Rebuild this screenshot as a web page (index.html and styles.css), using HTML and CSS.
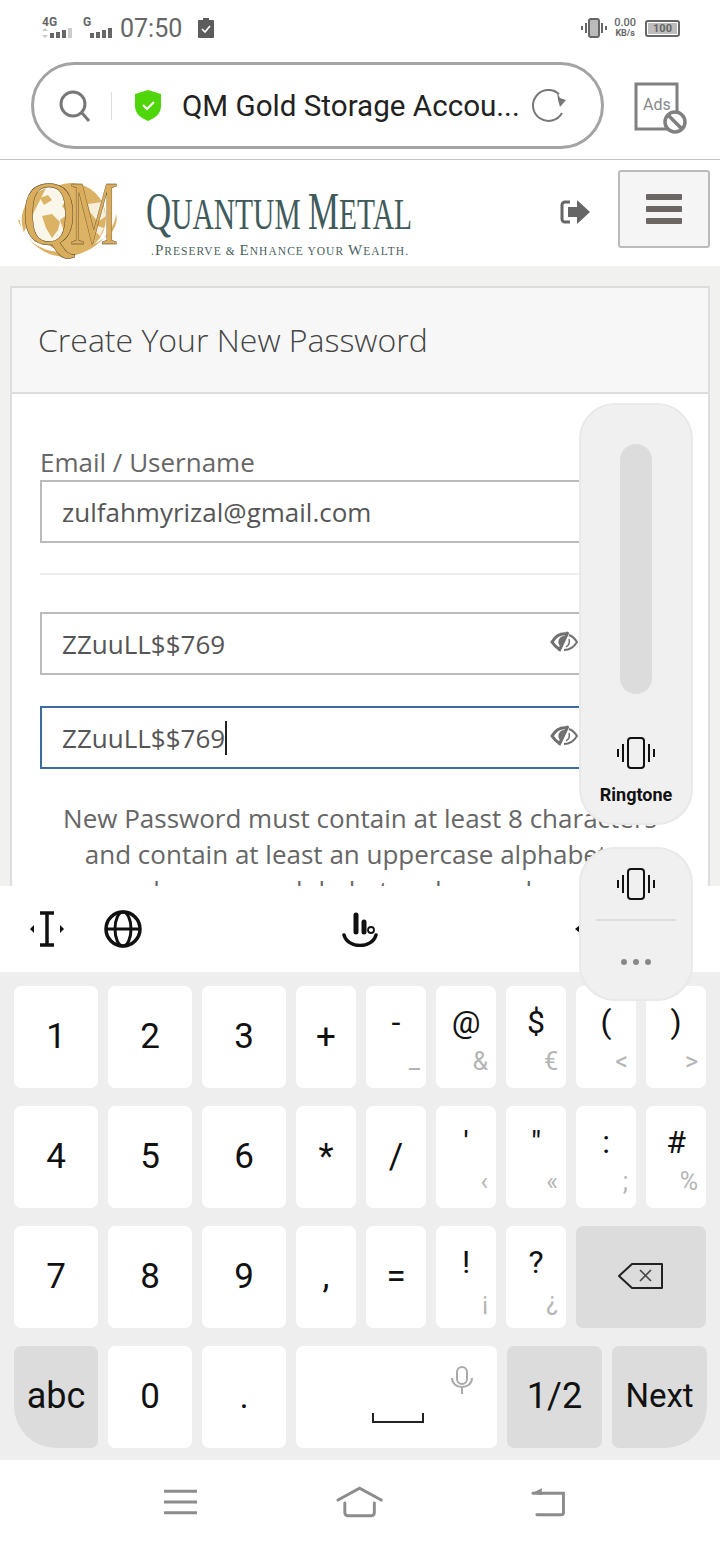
FILE: index.html
```html
<!DOCTYPE html>
<html lang="en">

<head>
    <meta charset="UTF-8">
    <meta name="viewport" content="width=device-width, initial-scale=1.0">
    <title>Create Your New Password</title>
    <link rel="stylesheet" href="styles.css">
</head>

<body>
    <div class="phone">
        <!-- status bar -->
        <div class="status">
            <div class="status-left">
                <div class="sig">
                    <span class="net">4G</span>
                    <svg width="32" height="10" viewBox="0 0 32 10">
                        <path d="M3 0l3 3H0zM3 10l3-3H0z" fill="#c8c8c8" />
                        <path d="M8 5h4v5H8zM14 4h4v6h-4zM20 2h4v8h-4z" fill="#666" />
                        <path d="M26 0h4v10h-4z" fill="#ccc" />
                    </svg>
                </div>
                <div class="sig sig-g">
                    <span class="net">G</span>
                    <svg width="32" height="10" viewBox="0 0 32 10">
                        <path d="M8 5h4v5H8zM14 4h4v6h-4zM20 2h4v8h-4zM26 0h4v10h-4z" fill="#666" />
                    </svg>
                </div>
                <span class="clock">07:50</span>
                <svg class="charge" width="16" height="20" viewBox="0 0 16 20">
                    <path d="M5 0h6v2h4a1 1 0 0 1 1 1v16a1 1 0 0 1-1 1H1a1 1 0 0 1-1-1V3a1 1 0 0 1 1-1h4z" fill="#5c5c5c" />
                    <path d="M4 11l3 3 5-6" fill="none" stroke="#fff" stroke-width="1.6" />
                </svg>
            </div>
            <div class="status-right">
                <svg width="26" height="20" viewBox="0 0 26 20">
                    <rect x="8" y="1" width="10" height="18" rx="2" fill="#bbb" stroke="#666" stroke-width="2" />
                    <path d="M5 5v10M21 5v10M1 8v4M25 8v4" stroke="#666" stroke-width="2" fill="none" />
                </svg>
                <div class="speed"><span>0.00</span><span class="speed-unit">KB/s</span></div>
                <div class="battery"><span class="battery-fill">100</span></div>
            </div>
        </div>

        <!-- browser address bar -->
        <div class="browser">
            <div class="address">
                <svg class="search" width="34" height="32" viewBox="0 0 34 32">
                    <circle cx="15" cy="14" r="12" fill="none" stroke="#777" stroke-width="3" />
                    <path d="M24 23l7 8" stroke="#777" stroke-width="3" fill="none" />
                </svg>
                <span class="address-sep"></span>
                <svg class="shield" width="26" height="31" viewBox="0 0 26 31">
                    <path d="M13 0l13 4v12c0 8-6 12-13 15C6 28 0 24 0 16V4z" fill="#4fd60a" />
                    <path d="M8 15l4 4 7-7" fill="none" stroke="#fff" stroke-width="2" />
                </svg>
                <span class="address-text">QM Gold Storage Accou...</span>
                <svg class="reload" width="36" height="34" viewBox="0 0 36 34">
                    <path d="M27 5A15.500 15.500 0 1 0 30 24" fill="none" stroke="#777" stroke-width="2" />
                    <path d="M25 3l3 6 6 2-6 7-2-7z" fill="#777" />
                </svg>
            </div>
            <svg class="ads" width="54" height="54" viewBox="0 0 54 54">
                <path d="M34 47H2V2h41v28" fill="none" stroke="#808080" stroke-width="3" />
                <text x="9" y="28" class="ads-text">Ads</text>
                <circle cx="41" cy="40" r="10" fill="#fff" stroke="#808080" stroke-width="3.5" />
                <path d="M34 33l14 14" stroke="#808080" stroke-width="3.5" />
            </svg>
        </div>

        <!-- site header -->
        <div class="site-header">
            <svg class="logo" width="100" height="84" viewBox="0 0 100 84">
                <circle cx="53" cy="38" r="35" fill="#dcb264" />
                <path d="M14 16c8-6 20-10 28-8l8 10-6 8 6 8-8 6 4 12-8 14c-12-2-20-8-24-20z" fill="#fbf6ea" />
                <path d="M24 36l10-2 8 8-2 8-6 8-6-10zM22 18l8-3 4 5-8 5z" fill="#dcb264" />
                <path d="M70 24l14-2 4 14-8 6-8-10zM80 46l6 2-4 8-4-4z" fill="#f7eeda" />
                <path d="M6 52c-8-20 6-38 22-44M2 40c0 22 40 52 90 14 6-6 8-14 6-20-1 14-16 36-44 42-22 4-44-10-54-36z" fill="#dcb264" />
                <text x="4" y="64" class="logo-letter" textLength="54" lengthAdjust="spacingAndGlyphs">Q</text>
                <text x="52" y="64" class="logo-letter" textLength="48" lengthAdjust="spacingAndGlyphs">M</text>
            </svg>
            <svg class="brand" width="272" height="76" viewBox="0 0 272 76">
                <text x="0" y="45" class="brand-name" textLength="266" lengthAdjust="spacingAndGlyphs"><tspan class="brand-cap">Q</tspan>UANTUM <tspan class="brand-cap">M</tspan>ETAL</text>
                <text x="5" y="71" class="brand-tag" textLength="257" lengthAdjust="spacing">.<tspan class="tag-cap">P</tspan>RESERVE &amp; <tspan class="tag-cap">E</tspan>NHANCE YOUR <tspan class="tag-cap">W</tspan>EALTH.</text>
            </svg>
            <svg class="logout" width="30" height="26" viewBox="0 0 30 26">
                <path d="M10 3H5a3 3 0 0 0-3 3v14a3 3 0 0 0 3 3h5" fill="none" stroke="#666" stroke-width="3" />
                <path d="M8 8h9V1l13 12-13 12v-7H8z" fill="#666" />
            </svg>
            <div class="menu-btn">
                <span class="menu-bar"></span>
                <span class="menu-bar"></span>
                <span class="menu-bar"></span>
            </div>
        </div>

        <!-- page content -->
        <div class="content">
            <div class="card">
                <div class="card-head">Create Your New Password</div>
                <div class="card-body">
                    <label class="field-label">Email / Username</label>
                    <div class="field">zulfahmyrizal@gmail.com</div>
                    <hr class="divider">
                    <div class="field field-pass">
                        ZZuuLL$$769
                        <svg class="eye" width="28" height="21" viewBox="0 0 28 21">
                            <path d="M17 3C10 2 5 6 2 11c2 3 4 5 7 7" fill="none" stroke="#6f6f6f" stroke-width="3" />
                            <path d="M15 5a6 6 0 0 0-5 10z" fill="#6f6f6f" />
                            <path d="M18 1L9 20" stroke="#6f6f6f" stroke-width="3" />
                            <path d="M19 4c3 1 6 4 8 7-3 5-7 8-13 8" fill="none" stroke="#6f6f6f" stroke-width="2" />
                            <path d="M19 8c1 3 0 6-3 8" fill="none" stroke="#6f6f6f" stroke-width="1.500" />
                        </svg>
                    </div>
                    <div class="field field-pass field-focus">
                        <span>ZZuuLL$$769<span class="caret"></span></span>
                        <svg class="eye" width="28" height="21" viewBox="0 0 28 21">
                            <path d="M17 3C10 2 5 6 2 11c2 3 4 5 7 7" fill="none" stroke="#6f6f6f" stroke-width="3" />
                            <path d="M15 5a6 6 0 0 0-5 10z" fill="#6f6f6f" />
                            <path d="M18 1L9 20" stroke="#6f6f6f" stroke-width="3" />
                            <path d="M19 4c3 1 6 4 8 7-3 5-7 8-13 8" fill="none" stroke="#6f6f6f" stroke-width="2" />
                            <path d="M19 8c1 3 0 6-3 8" fill="none" stroke="#6f6f6f" stroke-width="1.500" />
                        </svg>
                    </div>
                    <p class="help">New Password must contain at least 8 characters<br>and contain at least an uppercase alphabet, a<br>lowercase alphabet and a number</p>
                </div>
            </div>
        </div>

        <!-- keyboard -->
        <div class="kb-tools">
            <svg class="tool-cursor" width="34" height="36" viewBox="0 0 34 36">
                <path d="M10 2h14M10 34h14M17 2v32" stroke="#111" stroke-width="3.500" fill="none" />
                <path d="M0 18l4-4v8zM34 18l-4-4v8z" fill="#111" />
            </svg>
            <svg class="tool-globe" width="38" height="38" viewBox="0 0 38 38">
                <circle cx="19" cy="19" r="17" fill="none" stroke="#111" stroke-width="3.500" />
                <ellipse cx="19" cy="19" rx="8" ry="17" fill="none" stroke="#111" stroke-width="3" />
                <path d="M2 19h34" stroke="#111" stroke-width="3" />
            </svg>
            <svg class="tool-hand" width="36" height="36" viewBox="0 0 36 36">
                <path d="M14 4v17M22 11v10" stroke="#111" stroke-width="5" stroke-linecap="round" fill="none" />
                <circle cx="29" cy="19" r="3" fill="none" stroke="#111" stroke-width="1.800" />
                <path d="M2 24c4 14 28 14 32 0" fill="none" stroke="#111" stroke-width="3.500" stroke-linecap="round" />
            </svg>
            <span class="tool-arrow"></span>
        </div>
        <div class="kb">
            <div class="kb-row">
                <div class="key key-big">1</div>
                <div class="key key-big">2</div>
                <div class="key key-big">3</div>
                <div class="key key-big">+</div>
                <div class="key key-up">-<span class="sub sub-line">_</span></div>
                <div class="key key-up">@<span class="sub">&amp;</span></div>
                <div class="key key-up">$<span class="sub">€</span></div>
                <div class="key key-up">(<span class="sub">&lt;</span></div>
                <div class="key key-up">)<span class="sub">&gt;</span></div>
            </div>
            <div class="kb-row">
                <div class="key key-big">4</div>
                <div class="key key-big">5</div>
                <div class="key key-big">6</div>
                <div class="key key-big">*</div>
                <div class="key key-big">/</div>
                <div class="key key-up">'<span class="sub">‹</span></div>
                <div class="key key-up">"<span class="sub">«</span></div>
                <div class="key key-up">:<span class="sub">;</span></div>
                <div class="key key-up">#<span class="sub">%</span></div>
            </div>
            <div class="kb-row">
                <div class="key key-big">7</div>
                <div class="key key-big">8</div>
                <div class="key key-big">9</div>
                <div class="key key-big">,</div>
                <div class="key key-big">=</div>
                <div class="key key-up">!<span class="sub">¡</span></div>
                <div class="key key-up">?<span class="sub">¿</span></div>
                <div class="key key-fn key-back">
                    <svg width="46" height="26" viewBox="0 0 46 26">
                        <path d="M14 1h30v24H14L1 13z" fill="none" stroke="#222" stroke-width="2" stroke-linejoin="round" />
                        <path d="M22 7l11 11M33 7L22 18" stroke="#444" stroke-width="1.600" />
                    </svg>
                </div>
            </div>
            <div class="kb-row kb-row-last">
                <div class="key key-fn key-abc">abc</div>
                <div class="key key-big">0</div>
                <div class="key key-big">.</div>
                <div class="key key-space">
                    <svg class="mic" width="22" height="28" viewBox="0 0 22 28">
                        <rect x="6" y="1" width="10" height="17" rx="5" fill="none" stroke="#aaa" stroke-width="2" />
                        <path d="M1 12c0 12 20 12 20 0M11 22v6" fill="none" stroke="#aaa" stroke-width="2" />
                    </svg>
                    <svg class="space-mark" width="52" height="11" viewBox="0 0 52 11">
                        <path d="M1 0v9h50V0" fill="none" stroke="#222" stroke-width="2" />
                    </svg>
                </div>
                <div class="key key-fn">1/2</div>
                <div class="key key-fn key-next">Next</div>
            </div>
        </div>

        <!-- navigation bar -->
        <div class="nav">
            <svg width="34" height="26" viewBox="0 0 34 26">
                <path d="M1 2h32M1 13h32M1 24h32" stroke="#8c8c8c" stroke-width="3" stroke-linecap="round" />
            </svg>
            <svg class="nav-home" width="48" height="32" viewBox="0 0 48 32">
                <path d="M2 14L24 2l22 12" fill="none" stroke="#8c8c8c" stroke-width="3" stroke-linecap="round" />
                <path d="M9 17v10a3 3 0 0 0 3 3h24a3 3 0 0 0 3-3V17" fill="none" stroke="#8c8c8c" stroke-width="3" stroke-linecap="round" />
            </svg>
            <svg width="36" height="30" viewBox="0 0 36 30">
                <path d="M2 6h31v20a2 2 0 0 1-2 2H6" fill="none" stroke="#8c8c8c" stroke-width="3" stroke-linecap="round" />
                <path d="M1 6l10-5v7z" fill="#8c8c8c" />
            </svg>
        </div>

        <!-- volume popup over the page -->
        <div class="vol vol-main">
            <div class="vol-track"></div>
            <svg class="vib" width="38" height="32" viewBox="0 0 38 32">
                <rect x="11" y="1" width="16" height="30" rx="3" fill="none" stroke="#111" stroke-width="2" />
                <path d="M6 7v18M32 7v18M1 12v8M37 12v8" stroke="#111" stroke-width="2" />
            </svg>
            <span class="vol-name">Ringtone</span>
        </div>
        <div class="vol vol-small">
            <svg class="vib" width="38" height="32" viewBox="0 0 38 32">
                <rect x="11" y="1" width="16" height="30" rx="3" fill="none" stroke="#111" stroke-width="2" />
                <path d="M6 7v18M32 7v18M1 12v8M37 12v8" stroke="#111" stroke-width="2" />
            </svg>
            <span class="vol-line"></span>
            <div class="vol-dots"><span></span><span></span><span></span></div>
        </div>
    </div>
</body>

</html>
```

FILE: styles.css
```css
* {
    box-sizing: border-box;
}

body {
    margin: 0;
    font-family: Roboto, sans-serif;
    background: #fff;
}

.phone {
    position: relative;
    width: 720px;
    height: 1544px;
    display: flex;
    flex-direction: column;
    overflow: hidden;
}

/* status bar */
.status {
    height: 56px;
    padding: 0 40px 0 42px;
    display: flex;
    justify-content: space-between;
    align-items: center;
    color: #666;
}

.status-left,
.status-right {
    display: flex;
    align-items: center;
}

.sig {
    width: 32px;
    display: flex;
    flex-direction: column;
    gap: 1px;
}

.sig-g {
    margin-left: 8px;
}

.sig-g .net {
    margin-left: 1px;
}

.net {
    font-size: 12px;
    font-weight: 700;
    line-height: 9px;
}

.clock {
    font-size: 25px;
    margin-left: 6px;
}

.charge {
    margin-left: 16px;
}

.speed {
    display: flex;
    flex-direction: column;
    align-items: center;
    font-size: 11px;
    line-height: 10px;
    margin-left: 7px;
    font-weight: 500;
}

.speed-unit {
    font-size: 9px;
    font-weight: 700;
}

.battery {
    width: 35px;
    height: 17px;
    margin-left: 9px;
    border: 2px solid #666;
    border-radius: 3px;
    padding: 1px;
    display: flex;
}

.battery-fill {
    flex: 1;
    background: #bdbdbd;
    font-size: 11px;
    font-weight: 700;
    line-height: 11px;
    text-align: center;
}

/* address bar */
.browser {
    height: 104px;
    padding: 6px 32px 0 31px;
    border-bottom: 1px solid #c4c4c4;
    display: flex;
    align-items: flex-start;
    justify-content: space-between;
}

.address {
    width: 573px;
    height: 87px;
    border: 3px solid #a3a3a3;
    border-radius: 44px;
    padding-left: 24px;
    display: flex;
    align-items: center;
}

.address-sep {
    width: 1px;
    height: 28px;
    background: #ddd;
    margin: 0 23px 0 19px;
}

.address-text {
    font-size: 29.600px;
    color: #222;
    margin-left: 21px;
    white-space: nowrap;
    width: 350px;
}

.ads {
    margin-top: 20px;
}

.ads-text {
    font-family: Roboto, sans-serif;
    font-size: 16px;
    fill: #888;
}

/* site header */
.site-header {
    height: 106px;
    padding: 10px 10px 0 18px;
    display: flex;
    align-items: flex-start;
}

.logo {
    margin-top: 10px;
    flex-shrink: 0;
    overflow: visible;
}

.logo-letter {
    font-family: "Liberation Serif", serif;
    font-size: 92px;
    fill: #d9ad5c;
    stroke: #3d3020;
    stroke-width: 0.500px;
}

.brand {
    margin-left: 28px;
    margin-top: 14px;
    flex-shrink: 0;
}

.brand-name {
    font-family: "Liberation Serif", serif;
    font-size: 44px;
    fill: #3f5b5b;
}

.brand-cap {
    font-size: 52px;
}

.brand-tag {
    font-family: "Liberation Serif", serif;
    font-size: 11.500px;
    fill: #4b5f5f;
}

.tag-cap {
    font-size: 15px;
}

.logout {
    margin-left: 142px;
    margin-top: 29px;
    flex-shrink: 0;
}

.menu-btn {
    width: 92px;
    height: 78px;
    margin-left: 28px;
    border: 2px solid #bbb;
    border-radius: 3px;
    background: #f5f5f5;
    display: flex;
    flex-direction: column;
    align-items: center;
    justify-content: center;
    gap: 6px;
    flex-shrink: 0;
}

.menu-bar {
    width: 36px;
    height: 6px;
    border-radius: 1px;
    background: #6b6664;
}

/* page */
.content {
    height: 620px;
    flex-shrink: 0;
    padding: 20px 10px 0 10px;
    background: #f1f1f0;
    overflow: hidden;
    font-family: "Open Sans", sans-serif;
    color: #555;
}

.card {
    border: 2px solid #ddd;
    background: #fff;
    height: 800px;
}

.card-head {
    height: 106px;
    padding: 32px 0 0 26px;
    background: #f7f7f7;
    border-bottom: 2px solid #ddd;
    font-size: 32px;
    font-weight: 300;
    line-height: 40px;
    color: #444;
}

.card-body {
    padding: 50px 28px 0;
}

.field-label {
    display: block;
    font-size: 26px;
    line-height: 36px;
    color: #666;
}

.field {
    position: relative;
    height: 63px;
    border: 2px solid #bbb;
    padding: 0 20px;
    display: flex;
    align-items: center;
    font-size: 26px;
    color: #555;
}

.field-pass {
    margin-bottom: 31px;
}

.field-focus {
    border-color: #3a6d9e;
}

.caret {
    display: inline-block;
    width: 2px;
    height: 34px;
    background: #222;
    vertical-align: -7px;
}

.eye {
    position: absolute;
    left: 508px;
    top: 17px;
}

.divider {
    border: 0;
    border-top: 2px solid #eee;
    margin: 30px 0 37px;
}

.help {
    margin: 0 -10px;
    font-size: 26px;
    line-height: 36px;
    text-align: center;
    white-space: nowrap;
    color: #666;
}

/* keyboard */
.kb-tools {
    position: relative;
    height: 86px;
    flex-shrink: 0;
    background: #fff;
    display: flex;
    align-items: center;
}

.tool-cursor {
    margin-left: 30px;
}

.tool-globe {
    margin-left: 40px;
}

.tool-hand {
    margin-left: 200px;
}

.tool-arrow {
    margin-left: 197px;
    width: 0;
    height: 0;
    border: 4px solid transparent;
    border-right: 5px solid #111;
    border-left: 0;
}

.kb {
    height: 488px;
    flex-shrink: 0;
    padding: 14px 13px 0 14px;
    background: #eee;
    display: flex;
    flex-direction: column;
    gap: 18px;
}

.kb-row {
    display: grid;
    grid-template-columns: repeat(3, 84px) repeat(6, 60px);
    gap: 10px;
    height: 102px;
}

.kb-row-last {
    grid-template-columns: repeat(3, 84px) 201px 95px 95px;
}

.key {
    position: relative;
    background: #fff;
    border-radius: 7px;
    display: flex;
    align-items: center;
    justify-content: center;
    color: #111;
}

.key-big {
    font-size: 35px;
    padding-bottom: 2px;
}

.key-up {
    font-size: 32px;
    padding-bottom: 30px;
}

.key-fn {
    background: #dcdcdc;
    font-size: 36px;
    padding-bottom: 3px;
}

.key-back {
    grid-column: span 2;
}

.key-abc {
    border-bottom-left-radius: 42px;
}

.key-next {
    font-size: 33px;
    border-bottom-right-radius: 42px;
}

.sub {
    position: absolute;
    right: 8px;
    bottom: 12px;
    font-size: 25px;
    line-height: 28px;
    color: #b5b5b5;
}

.sub-line {
    bottom: 14px;
    right: 6px;
}

.mic {
    position: absolute;
    right: 24px;
    top: 20px;
}

.space-mark {
    position: absolute;
    left: 76px;
    bottom: 24px;
}

/* nav */
.nav {
    height: 84px;
    background: #fff;
    display: flex;
    align-items: center;
    padding: 0 154px 0 164px;
}

.nav-home {
    margin: 0 147px 0 139px;
}

/* volume popup */
.vol {
    position: absolute;
    left: 579px;
    width: 114px;
    background: #f0f0f0;
    border: 2px solid #e9e9e9;
    border-radius: 36px;
    display: flex;
    flex-direction: column;
    align-items: center;
}

.vol-main {
    top: 403px;
    height: 422px;
    padding-top: 39px;
}

.vol-small {
    top: 847px;
    height: 154px;
    padding-top: 19px;
}

.vol-track {
    width: 32px;
    height: 250px;
    border-radius: 16px;
    background: #dcdcdc;
}

.vol-main .vib {
    margin-top: 43px;
}

.vol-name {
    margin-top: 16px;
    font-size: 18px;
    font-weight: 700;
    line-height: 20px;
    color: #111;
}

.vol-line {
    width: 80px;
    height: 2px;
    background: #ddd;
    margin-top: 19px;
}

.vol-dots {
    display: flex;
    gap: 6px;
    margin-top: 38px;
}

.vol-dots span {
    width: 6px;
    height: 6px;
    border-radius: 50%;
    background: #888;
}
```
